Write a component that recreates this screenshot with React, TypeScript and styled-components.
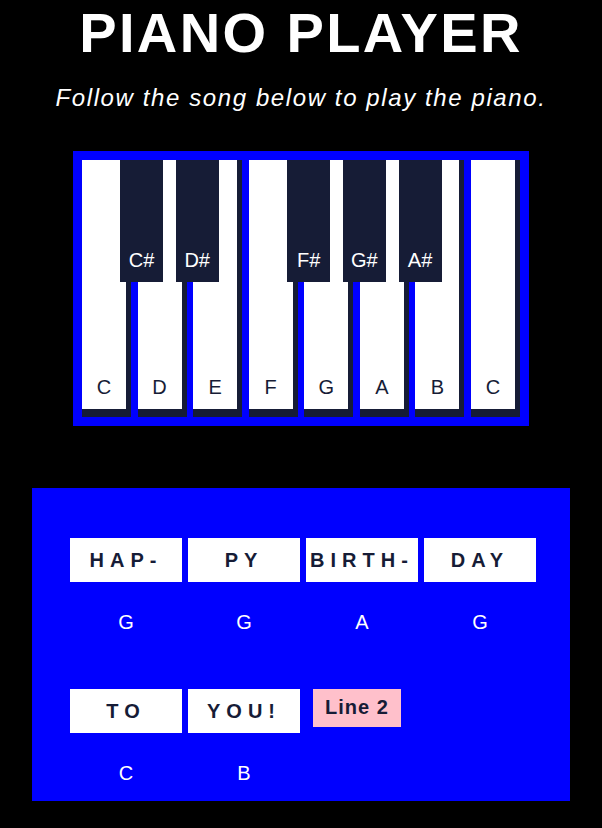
import * as React from 'react'
import styled, { createGlobalStyle } from 'styled-components'

const DARK = '#161c36'
const BLUE = '#0000ff'
const KEY_PITCH = 55.71

const GlobalStyle = createGlobalStyle`
  html, body {
    margin: 0;
    padding: 0;
    background: #000;
  }
  body {
    font-family: 'Liberation Sans', Arial, sans-serif;
    color: #fff;
  }
`

const Page = styled.main`
  display: flex;
  flex-direction: column;
  align-items: center;
  padding-bottom: 27px;
`

const Title = styled.h1`
  margin: 0;
  font-size: 56px;
  font-weight: bold;
  letter-spacing: 2.4px;
  line-height: normal;
`

const Subtitle = styled.p`
  margin: 19px 0 0;
  font-size: 24px;
  font-style: italic;
  letter-spacing: 1.6px;
`

const PianoFrame = styled.div`
  margin-top: 39px;
  width: 438px;
  padding: 9px;
  background: ${BLUE};
`

const Keys = styled.div`
  position: relative;
  display: flex;
  justify-content: space-between;
`

const WhiteKey = styled.div`
  width: 44px;
  height: 249px;
  background: #fff;
  border-right: 5px solid ${DARK};
  border-bottom: 8px solid ${DARK};
  display: flex;
  align-items: flex-end;
  justify-content: center;
  box-sizing: content-box;
`

const KeyLabel = styled.span<{ $light?: boolean }>`
  font-size: 20px;
  line-height: 23px;
  margin-bottom: 10px;
  color: ${p => (p.$light ? '#fff' : DARK)};
`

const BlackKey = styled.div`
  position: absolute;
  top: 0;
  width: 43px;
  height: 122px;
  background: ${DARK};
  display: flex;
  align-items: flex-end;
  justify-content: center;
`

const SongPanel = styled.section`
  margin-top: 62px;
  width: 462px;
  padding: 50px 38px 16px;
  background: ${BLUE};
  display: flex;
  flex-direction: column;
  gap: 55px;
`

const LyricRow = styled.div`
  display: flex;
  align-items: flex-start;
  gap: 6px;
`

const Syllable = styled.div`
  display: flex;
  flex-direction: column;
  align-items: center;
  gap: 29px;
`

const LyricBox = styled.div`
  width: 112px;
  height: 44px;
  background: #fff;
  color: ${DARK};
  font-size: 20px;
  font-weight: bold;
  letter-spacing: 6px;
  display: flex;
  align-items: center;
  justify-content: center;
`

const Note = styled.span`
  font-size: 20px;
  line-height: 23px;
  color: #fff;
`

const LineButton = styled.button`
  margin-left: 7px;
  padding: 7px 12px 8px;
  border: none;
  background: pink;
  color: ${DARK};
  font-family: inherit;
  font-size: 20px;
  font-weight: bold;
  letter-spacing: 1px;
  line-height: 23px;
`

const whiteKeys = ['C', 'D', 'E', 'F', 'G', 'A', 'B', 'C']
const blackKeys = [
  { note: 'C#', slot: 0 },
  { note: 'D#', slot: 1 },
  { note: 'F#', slot: 3 },
  { note: 'G#', slot: 4 },
  { note: 'A#', slot: 5 },
]

const song = [
  [
    { word: 'HAP-', note: 'G' },
    { word: 'PY', note: 'G' },
    { word: 'BIRTH-', note: 'A' },
    { word: 'DAY', note: 'G' },
  ],
  [
    { word: 'TO', note: 'C' },
    { word: 'YOU!', note: 'B' },
  ],
]

const App: React.FC = () => (
  <>
    <GlobalStyle />
    <Page>
      <Title>PIANO PLAYER</Title>
      <Subtitle>Follow the song below to play the piano.</Subtitle>

      <PianoFrame>
        <Keys>
          {whiteKeys.map((k, i) => (
            <WhiteKey key={i}>
              <KeyLabel>{k}</KeyLabel>
            </WhiteKey>
          ))}
          {blackKeys.map(b => (
            <BlackKey key={b.note} style={{ left: 38 + b.slot * KEY_PITCH }}>
              <KeyLabel $light>{b.note}</KeyLabel>
            </BlackKey>
          ))}
        </Keys>
      </PianoFrame>

      <SongPanel>
        {song.map((line, li) => (
          <LyricRow key={li}>
            {line.map((s, i) => (
              <Syllable key={i}>
                <LyricBox>{s.word}</LyricBox>
                <Note>{s.note}</Note>
              </Syllable>
            ))}
            {li === 1 && <LineButton>Line 2</LineButton>}
          </LyricRow>
        ))}
      </SongPanel>
    </Page>
  </>
)

export default App
